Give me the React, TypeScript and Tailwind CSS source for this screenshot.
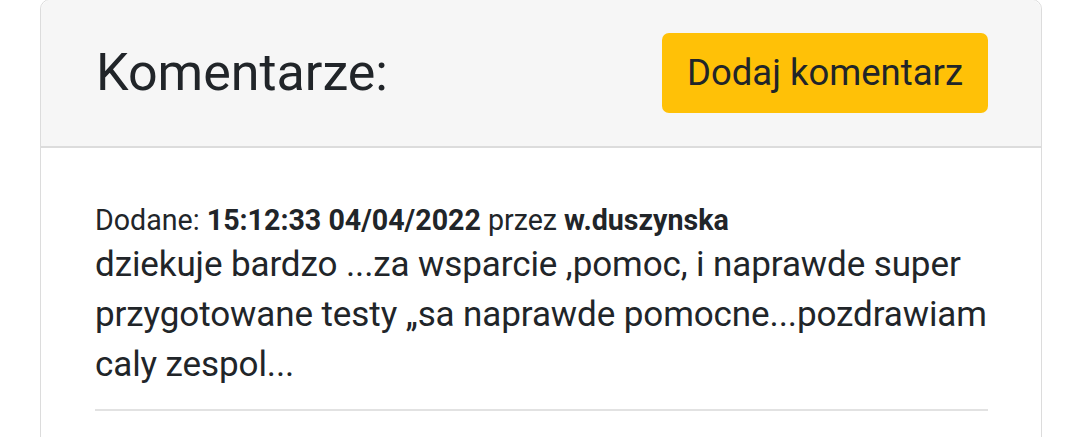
export default function App() {
  return (
    <div className="w-[1080px] h-[437px] overflow-hidden bg-white" style={{ fontFamily: 'Roboto, "Liberation Sans", sans-serif' }}>
      <div className="ml-[40px] w-[1002px] h-[480px] -mt-[1px] border border-[#dcdcdc] rounded-[10px] bg-white text-[#212529]">
        <div className="flex items-center justify-between h-[148px] pl-[55px] pr-[53px] bg-[#f6f6f6] border-b-2 border-[#dcdcdc] rounded-t-[10px]">
          <h2 className="text-[52px] leading-none font-normal">Komentarze:</h2>
          <button type="button" className="h-[80px] w-[326px] rounded-[7px] bg-[#ffc107] text-[36.5px] text-[#212529]">
            Dodaj komentarz
          </button>
        </div>
        <div className="pl-[54px] pr-[53px] pt-[52px]">
          <div className="text-[28.6px] leading-[40px]">
            Dodane: <b className="font-bold">15:12:33 04/04/2022</b> przez <b className="font-bold">w.duszynska</b>
          </div>
          <p className="text-[35px] leading-[50px] tracking-[-0.1px] pb-[19px] -mr-[12px]">
            dziekuje bardzo ...za wsparcie ,pomoc, i naprawde super przygotowane testy „sa naprawde pomocne...pozdrawiam caly zespol...
          </p>
          <div className="border-b-2 border-[#e2e2e2]" />
        </div>
      </div>
    </div>
  )
}
